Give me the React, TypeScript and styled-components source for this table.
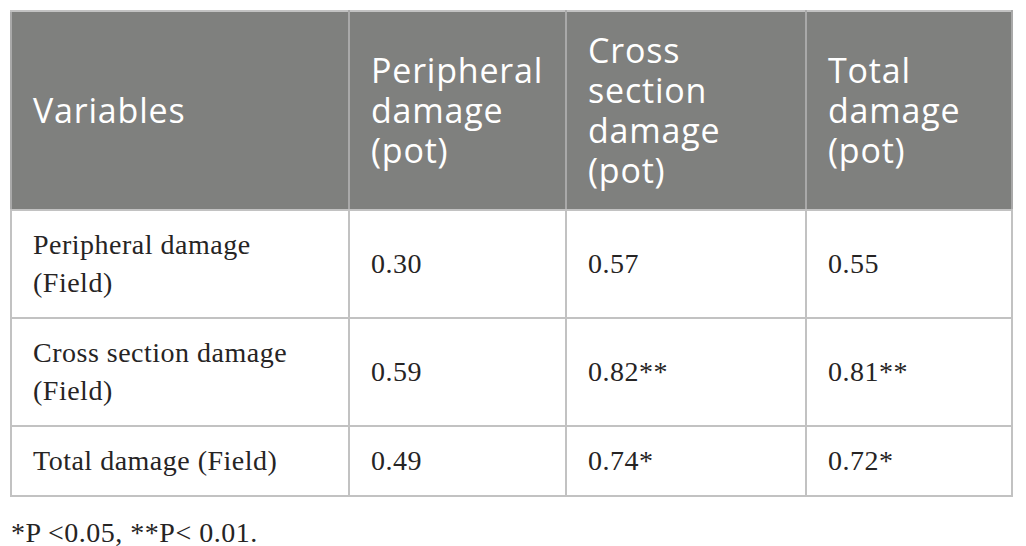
import React from 'react';
import styled, {createGlobalStyle} from 'styled-components';

const GlobalStyle = createGlobalStyle`
  html, body {
    margin: 0;
    padding: 0;
    background: #ffffff;
  }
`;

type Row = {
    label: string;
    values: string[];
};

const headers = ['Variables', 'Peripheral damage (pot)', 'Cross section damage (pot)', 'Total damage (pot)'];

const rows: Row[] = [
    {label: 'Peripheral damage (Field)', values: ['0.30', '0.57', '0.55']},
    {label: 'Cross section damage (Field)', values: ['0.59', '0.82**', '0.81**']},
    {label: 'Total damage (Field)', values: ['0.49', '0.74*', '0.72*']},
];

const colWidths = [338, 217, 240, 206];

export default function App() {
    return (
        <>
            <GlobalStyle/>
            <Page>
                <Table>
                    <colgroup>
                        {colWidths.map((w, i) => (
                            <col key={i} style={{width: w}}/>
                        ))}
                    </colgroup>
                    <thead>
                        <tr>
                            {headers.map((h) => (
                                <HeadCell key={h}>{h}</HeadCell>
                            ))}
                        </tr>
                    </thead>
                    <tbody>
                        {rows.map((row) => (
                            <tr key={row.label}>
                                <BodyCell>{row.label}</BodyCell>
                                {row.values.map((v, i) => (
                                    <BodyCell key={i}>{v}</BodyCell>
                                ))}
                            </tr>
                        ))}
                    </tbody>
                </Table>
                <Footnote>*P &lt;0.05, **P&lt; 0.01.</Footnote>
            </Page>
        </>
    );
}

const Page = styled.div`
  padding: 10px 0 0 10px;
`;

const Table = styled.table`
  border-collapse: collapse;
  table-layout: fixed;
  width: 1003px;
  border: 2px solid #c2c2c2;
`;

const HeadCell = styled.th`
  background: #7f807e;
  color: #ffffff;
  font-family: "Open Sans", "Noto Sans", sans-serif;
  font-weight: 400;
  font-size: 34px;
  line-height: 40px;
  letter-spacing: 0.8px;
  text-align: left;
  vertical-align: middle;
  padding: 18px 20px 19px 21px;
  border: 2px solid #a9a9a9;
  border-top-color: #c2c2c2;
  border-bottom-color: #c2c2c2;
`;

const BodyCell = styled.td`
  color: #262424;
  font-family: "Liberation Serif", "Times New Roman", serif;
  font-size: 28px;
  line-height: 38px;
  letter-spacing: 0.5px;
  vertical-align: middle;
  padding: 15px 20px 15px 21px;
  border: 2px solid #c2c2c2;
`;

const Footnote = styled.p`
  margin: 17px 0 0 1px;
  color: #262424;
  font-family: "Liberation Serif", "Times New Roman", serif;
  font-size: 28px;
  line-height: 38px;
  letter-spacing: 0.5px;
`;
